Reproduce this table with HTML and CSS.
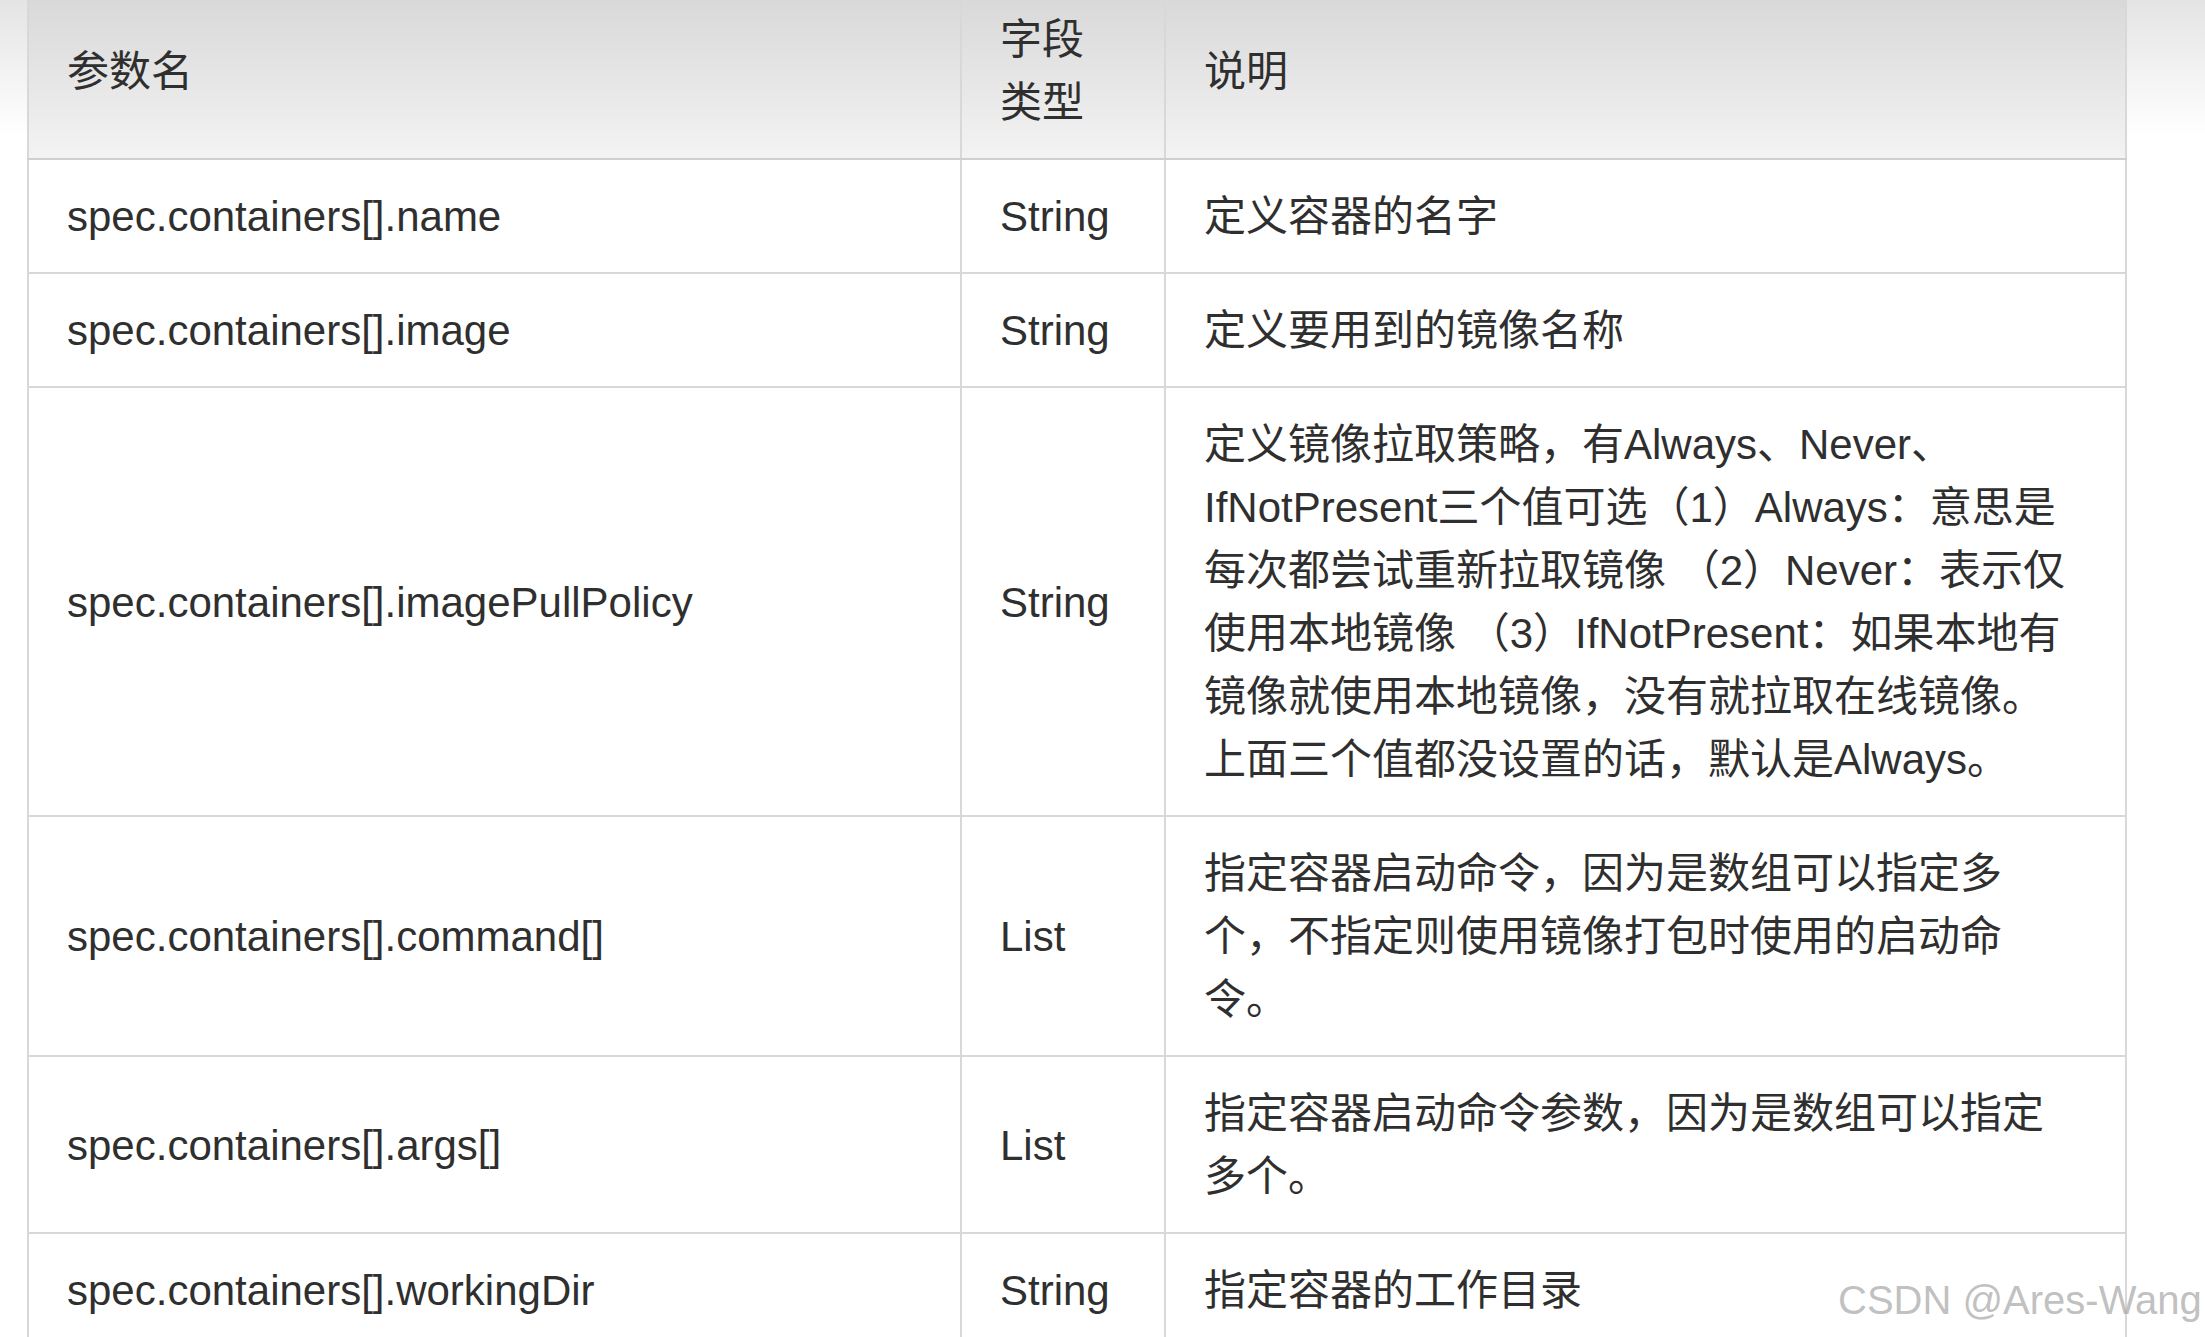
FILE: index.html
```html
<!DOCTYPE html>
<html lang="zh-CN">
<head>
<meta charset="utf-8">
<title>spec.containers 参数</title>
<link rel="stylesheet" href="styles.css">
</head>
<body>
<div class="page">
  <table class="params">
    <colgroup>
      <col class="c-name">
      <col class="c-type">
      <col class="c-desc">
    </colgroup>
    <thead>
      <tr>
        <th class="name">参数名</th>
        <th class="type">字段类型</th>
        <th class="desc">说明</th>
      </tr>
    </thead>
    <tbody>
      <tr>
        <td class="name">spec.containers[].name</td>
        <td class="type">String</td>
        <td class="desc">定义容器的名字</td>
      </tr>
      <tr>
        <td class="name">spec.containers[].image</td>
        <td class="type">String</td>
        <td class="desc">定义要用到的镜像名称</td>
      </tr>
      <tr>
        <td class="name">spec.containers[].imagePullPolicy</td>
        <td class="type">String</td>
        <td class="desc">定义镜像拉取策略，有Always、Never、IfNotPresent三个值可选（1）Always：意思是每次都尝试重新拉取镜像 （2）Never：表示仅使用本地镜像 （3）IfNotPresent：如果本地有镜像就使用本地镜像，没有就拉取在线镜像。上面三个值都没设置的话，默认是Always。</td>
      </tr>
      <tr>
        <td class="name">spec.containers[].command[]</td>
        <td class="type">List</td>
        <td class="desc">指定容器启动命令，因为是数组可以指定多个，不指定则使用镜像打包时使用的启动命令。</td>
      </tr>
      <tr>
        <td class="name">spec.containers[].args[]</td>
        <td class="type">List</td>
        <td class="desc">指定容器启动命令参数，因为是数组可以指定多个。</td>
      </tr>
      <tr>
        <td class="name">spec.containers[].workingDir</td>
        <td class="type">String</td>
        <td class="desc">指定容器的工作目录</td>
      </tr>
    </tbody>
  </table>
  <div class="watermark">CSDN @Ares-Wang</div>
</div>
</body>
</html>
```

FILE: styles.css
```css
html, body {
  margin: 0;
  padding: 0;
}

body {
  width: 2205px;
  height: 1337px;
  overflow: hidden;
  background: #ffffff linear-gradient(to bottom, #e4e4e4 0px, #ffffff 135px) no-repeat;
  font-family: "Liberation Sans", "Noto Sans CJK SC", sans-serif;
  color: #2f2f2f;
}

.page {
  position: relative;
  height: 1337px;
  padding-left: 27px;
}

.params {
  margin-top: -19px;
  width: 2098px;
  table-layout: fixed;
  border-collapse: collapse;
  font-size: 42px;
  line-height: 63px;
  text-spacing-trim: space-all;
}

.c-name { width: 933px; }
.c-type { width: 204px; }
.c-desc { width: 961px; }

.params th,
.params td {
  border: 2px solid #d8d8d8;
  padding: 25px 38px 24px 38px;
  text-align: left;
  font-weight: normal;
  vertical-align: middle;
}

.params td {
  background: #ffffff;
}

.params thead th {
  background: linear-gradient(to bottom, #d6d6d6 0%, #f3f3f3 100%);
  border-bottom: 2px solid #cfcfcf;
}

.params .type {
  padding-right: 40px;
}

.params .desc {
  padding-right: 40px;
  word-break: normal;
  line-break: strict;
}

.watermark {
  position: absolute;
  left: 1838px;
  top: 1296px;
  font-family: "Liberation Sans", sans-serif;
  font-size: 40px;
  line-height: 46px;
  color: rgba(165, 165, 165, 0.7);
  white-space: nowrap;
}
```
